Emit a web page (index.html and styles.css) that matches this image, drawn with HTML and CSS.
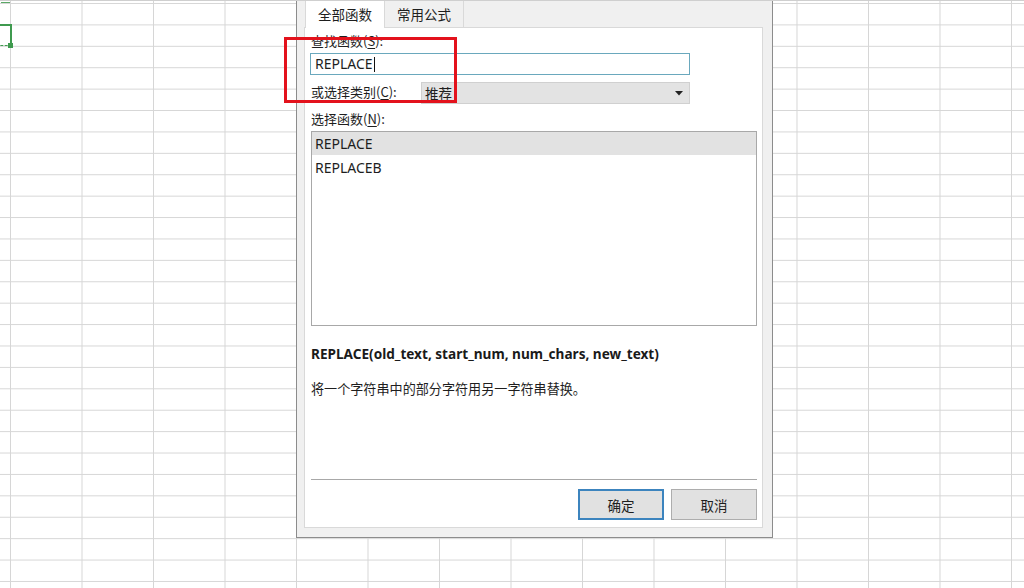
FILE: index.html
```html
<!DOCTYPE html>
<html lang="zh-CN">
<head>
<meta charset="utf-8">
<title>插入函数</title>
<link rel="stylesheet" href="styles.css">
</head>
<body>
<div class="sheet">
  <div class="cell-top"></div>
  <div class="cell-sel"><span class="handle"></span></div>

  <div class="dialog">
    <div class="tabs">
      <div class="tab active">全部函数</div>
      <div class="tab">常用公式</div>
    </div>
    <div class="panel">
      <div class="label">查找函数(<u>S</u>):</div>
      <div class="input">REPLACE<span class="caret"></span></div>
      <div class="row">
        <div class="label row-label">或选择类别(<u>C</u>):</div>
        <div class="select">
          <span>推荐</span>
          <svg class="arrow" width="8" height="5" viewBox="0 0 8 5"><path d="M0 0H8L4 4.5Z" fill="#222"/></svg>
        </div>
      </div>
      <div class="label label-list">选择函数(<u>N</u>):</div>
      <div class="listbox">
        <div class="item selected">REPLACE</div>
        <div class="item">REPLACEB</div>
      </div>
      <div class="signature">REPLACE(old_text, start_num, num_chars, new_text)</div>
      <div class="desc">将一个字符串中的部分字符用另一字符串替换。</div>
      <div class="separator"></div>
      <div class="buttons">
        <div class="btn primary">确定</div>
        <div class="btn">取消</div>
      </div>
    </div>
  </div>

  <div class="highlight"></div>
</div>
</body>
</html>
```

FILE: styles.css
```css
* { box-sizing: border-box; }

html, body {
  margin: 0;
  padding: 0;
}

body {
  width: 1024px;
  height: 588px;
  overflow: hidden;
  font-family: "Noto Sans", "Noto Sans CJK SC", sans-serif;
  color: #1e1e1e;
}

.sheet {
  position: relative;
  width: 1024px;
  height: 588px;
  background-color: #ffffff;
  background-image:
    linear-gradient(to right, #d6d6d6 1px, transparent 1px),
    linear-gradient(to bottom, #d6d6d6 1px, transparent 1px);
  background-size: 71.5px 21.42px;
  background-position: 10px 2px;
  border-top: 1px solid #cfcfcf;
}

.cell-top {
  position: absolute;
  left: 1px;
  top: 1px;
  width: 9px;
  height: 1px;
  background: #5aa866;
}

.cell-sel {
  position: absolute;
  left: -4px;
  top: 23px;
  width: 16px;
  height: 22px;
  border-top: 2px solid #3f9a4f;
  border-right: 2px solid #3f9a4f;
  border-bottom: 1px dashed #3f9a4f;
}

.cell-sel .handle {
  position: absolute;
  right: -3px;
  bottom: -3px;
  width: 5px;
  height: 5px;
  background: #3f9a4f;
}

.dialog {
  position: absolute;
  left: 296px;
  top: 0;
  width: 477px;
  height: 537px;
  background: #f0f0f0;
  border: 1px solid #8c8c8c;
  border-top: none;
  padding: 0 9px 0 7px;
}

.tabs {
  display: flex;
  height: 26px;
  padding-left: 1px;
}

.tab {
  height: 26px;
  padding: 0 12px;
  font-size: 13.5px;
  line-height: 27px;
  font-family: "Noto Sans CJK SC", sans-serif;
  border: 1px solid #d9d9d9;
  border-bottom: none;
  border-top: none;
  background: #f0f0f0;
  color: #1e1e1e;
}

.tab.active {
  background: #ffffff;
  position: relative;
  height: 27px;
  z-index: 1;
}

.tab + .tab {
  border-left: none;
}

.panel {
  height: 501px;
  background: #ffffff;
  border: 1px solid #d9d9d9;
  padding: 4px 5px 7px 6px;
  display: flex;
  flex-direction: column;
}

.label {
  font-family: "Noto Sans CJK SC", sans-serif;
  font-size: 13px;
  line-height: 18px;
  height: 18px;
}

.label u {
  text-underline-offset: 2px;
}

.input {
  margin-top: 3px;
  margin-left: -1px;
  width: 380px;
  height: 22px;
  border: 1px solid #6aa8bd;
  padding-left: 4px;
  font-size: 14px;
  line-height: 20px;
  display: flex;
  align-items: center;
}

.caret {
  display: inline-block;
  width: 1px;
  height: 15px;
  background: #111;
  margin-left: 1px;
}

.row {
  margin-top: 7px;
  display: flex;
  align-items: center;
  height: 22px;
}

.row .row-label {
  width: 110px;
  margin-top: -2px;
}

.select {
  width: 269px;
  height: 22px;
  background: #e3e3e3;
  border: 1px solid #d0d0d0;
  padding: 0 6px 0 3px;
  display: flex;
  align-items: center;
  justify-content: space-between;
  font-family: "Noto Sans CJK SC", sans-serif;
  font-size: 13.5px;
}

.arrow {
  display: block;
}

.label-list {
  margin-top: 6px;
}

.listbox {
  margin-top: 3px;
  width: 446px;
  height: 195px;
  border: 1px solid #a8a8a8;
}

.item {
  height: 23px;
  line-height: 23px;
  padding-left: 3px;
  font-size: 14px;
  margin-bottom: 1px;
}

.item.selected {
  background: #e2e2e2;
}

.signature {
  margin-top: 19px;
  font-size: 13.6px;
  font-weight: bold;
  line-height: 18px;
  height: 18px;
  color: #1a1a1a;
}

.desc {
  margin-top: 17px;
  font-family: "Noto Sans CJK SC", sans-serif;
  font-size: 13.1px;
  line-height: 18px;
  height: 18px;
}

.separator {
  margin-top: auto;
  width: 446px;
  height: 1px;
  background: #a8a8a8;
}

.buttons {
  margin-top: 9px;
  display: flex;
  justify-content: flex-end;
  gap: 7px;
  width: 446px;
}

.btn {
  width: 86px;
  height: 31px;
  background: #e1e1e1;
  border: 1px solid #adadad;
  font-family: "Noto Sans CJK SC", sans-serif;
  font-size: 13.5px;
  display: flex;
  align-items: center;
  justify-content: center;
}

.btn.primary {
  border: 2px solid #3c84be;
}

.highlight {
  position: absolute;
  left: 284px;
  top: 36px;
  width: 173px;
  height: 66px;
  border: 3px solid #e3121c;
}
```
